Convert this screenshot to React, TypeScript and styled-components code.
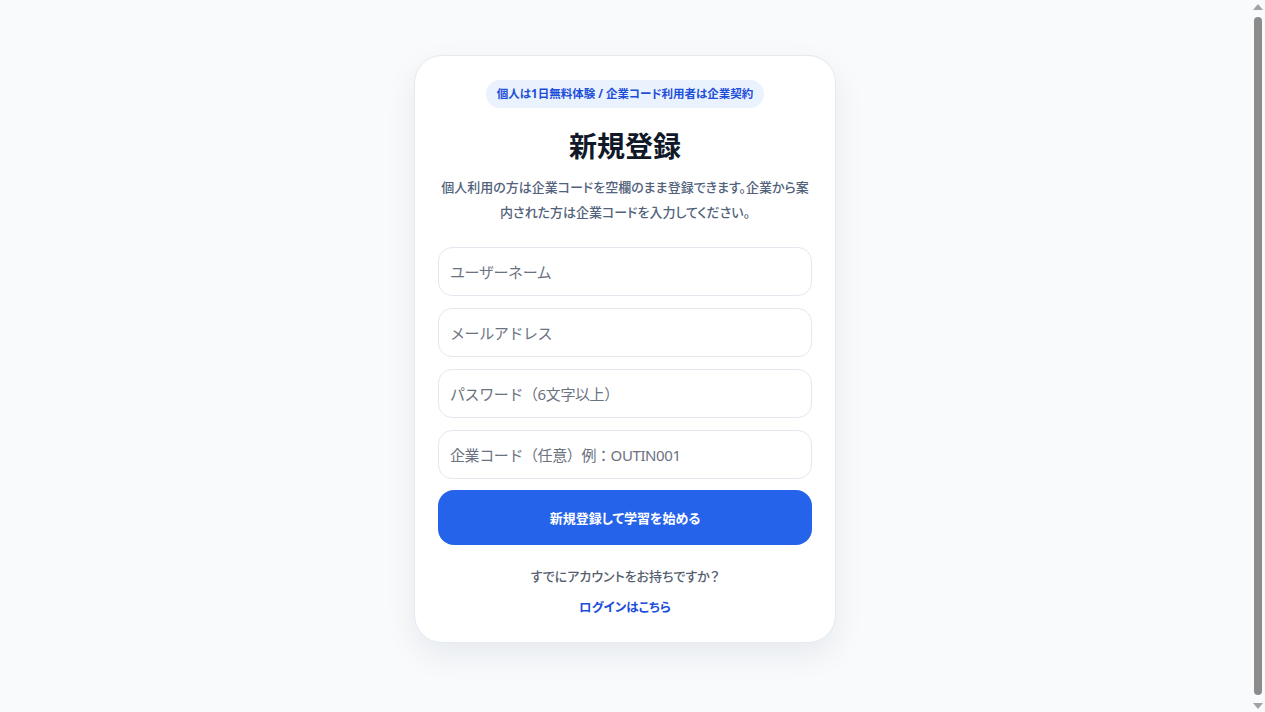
import styled, { createGlobalStyle } from "styled-components";

const GlobalStyle = createGlobalStyle`
  html {
    background: #f8fafc;
  }
  body {
    margin: 8px;
    background: #f8fafc;
    font-family: "Noto Sans", "Noto Sans CJK JP", sans-serif;
    font-feature-settings: "palt";
    color: #0f172a;
  }
  * {
    box-sizing: border-box;
  }
`;

const Page = styled.div`
  min-height: 100vh;
  display: flex;
  justify-content: center;
  align-items: flex-start;
  padding: 47px 15px 0 0;
`;

const Card = styled.div`
  width: 422px;
  background: #ffffff;
  border: 1px solid #e5e9f0;
  border-radius: 28px;
  box-shadow: 0 12px 32px rgba(15, 23, 42, 0.07);
  padding: 24px 23px 24px;
  display: flex;
  flex-direction: column;
  align-items: center;
`;

const Badge = styled.div`
  background: #eaf2fe;
  color: #1d4ed8;
  font-size: 11.5px;
  font-weight: 700;
  line-height: 28px;
  height: 28px;
  padding: 0 11px;
  border-radius: 14px;
`;

const Title = styled.h1`
  margin: 20px 0 0;
  font-size: 28px;
  line-height: 36px;
  font-weight: 700;
  color: #111827;
`;

const Description = styled.p`
  margin: 11px 0 0;
  font-size: 13px;
  line-height: 25px;
  font-weight: 500;
  color: #52627a;
  text-align: center;
`;

const Form = styled.form`
  width: 100%;
  margin-top: 22px;
  display: flex;
  flex-direction: column;
  gap: 12px;
`;

const Input = styled.input`
  width: 100%;
  height: 49px;
  border: 1px solid #e4e8ee;
  border-radius: 14px;
  padding: 0 11px;
  font-family: "Noto Sans", "Noto Sans CJK JP", sans-serif;
  font-size: 15px;
  letter-spacing: -0.4px;
  color: #111827;
  background: #ffffff;
  outline: none;

  &::placeholder {
    color: #6b7280;
  }
`;

const SubmitButton = styled.button`
  width: 100%;
  height: 55px;
  margin-top: -1px;
  border: none;
  border-radius: 16px;
  background: #2563eb;
  color: #ffffff;
  font-family: "Noto Sans", "Noto Sans CJK JP", sans-serif;
  font-feature-settings: "palt";
  font-size: 13px;
  font-weight: 700;
  cursor: pointer;
`;

const Footer = styled.div`
  margin-top: 21px;
  display: flex;
  flex-direction: column;
  align-items: center;
  gap: 12px;
`;

const FooterText = styled.span`
  font-size: 13px;
  line-height: 20px;
  font-weight: 500;
  color: #55606f;
`;

const LoginLink = styled.a`
  font-size: 12.5px;
  line-height: 20px;
  font-weight: 700;
  color: #1d4ed8;
  text-decoration: none;
  cursor: pointer;
`;

// the reference shows a classic scrollbar at the right edge
const ScrollTrack = styled.div`
  position: fixed;
  top: 0;
  right: 0;
  width: 15px;
  height: 100vh;
  background: #f8fafc;
  display: flex;
  flex-direction: column;
  align-items: center;
  justify-content: space-between;
  padding: 4px 0 3px;
`;

const ScrollThumb = styled.div`
  flex: 1;
  width: 8px;
  margin: 7px 0 8px;
  border-radius: 4px;
  background: #8b8b8b;
`;

const Arrow = styled.div<{ $down?: boolean }>`
  width: 0;
  height: 0;
  border-left: 5px solid transparent;
  border-right: 5px solid transparent;
  ${(p) =>
    p.$down
      ? "border-top: 6px solid #a3a3a3;"
      : "border-bottom: 6px solid #a3a3a3;"}
`;

function App() {
  const fields = [
    { type: "text", placeholder: "ユーザーネーム" },
    { type: "email", placeholder: "メールアドレス" },
    { type: "password", placeholder: "パスワード（6文字以上）" },
    { type: "text", placeholder: "企業コード（任意）例：OUTIN001" },
  ];

  return (
    <>
      <GlobalStyle />
      <Page>
        <Card>
          <Badge>個人は1日無料体験 / 企業コード利用者は企業契約</Badge>
          <Title>新規登録</Title>
          <Description>
            個人利用の方は企業コードを空欄のまま登録できます。企業から案内された方は企業コードを入力してください。
          </Description>
          <Form onSubmit={(e) => e.preventDefault()}>
            {fields.map((f, idx) => (
              <Input key={idx} type={f.type} placeholder={f.placeholder} />
            ))}
            <SubmitButton type="submit">新規登録して学習を始める</SubmitButton>
          </Form>
          <Footer>
            <FooterText>すでにアカウントをお持ちですか？</FooterText>
            <LoginLink>ログインはこちら</LoginLink>
          </Footer>
        </Card>
      </Page>
      <ScrollTrack>
        <Arrow />
        <ScrollThumb />
        <Arrow $down />
      </ScrollTrack>
    </>
  );
}

export default App;
